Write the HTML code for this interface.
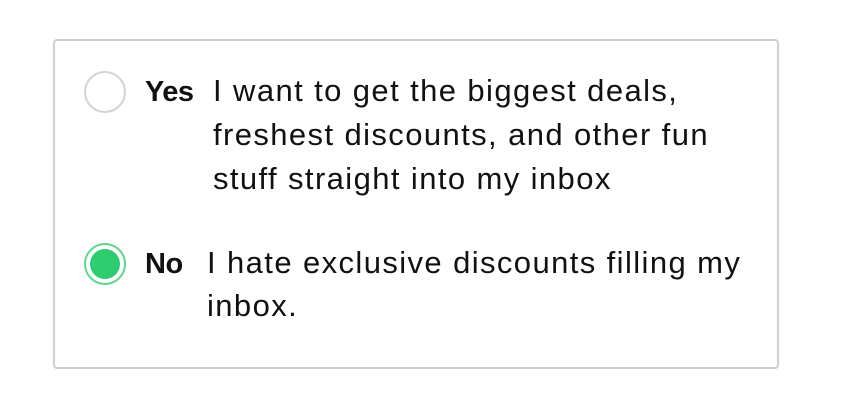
<!DOCTYPE html>
<html><head><style>
body{margin:0;width:862px;height:406px;background:#fff;position:relative;overflow:hidden;font-family:"Liberation Sans",sans-serif;color:#111;}
.box{position:absolute;left:53px;top:39px;width:722px;height:326px;border:2px solid #d0d0d0;border-radius:4px;}
.r{position:absolute;width:42px;height:42px;border-radius:50%;border:2px solid #d4d4d4;box-sizing:border-box;}
.r.on{border-color:#5fd68e;}
.r.on::after{content:"";position:absolute;left:4px;top:4px;width:30px;height:30px;border-radius:50%;background:#2dcc6f;}
.t{position:absolute;font-size:31px;line-height:44px;white-space:nowrap;letter-spacing:1.4px;}
b{font-weight:bold;font-size:29px;letter-spacing:-0.5px;}
</style></head><body>
<div class="box"></div>
<div class="r" style="left:84px;top:71px"></div>
<div class="t" style="left:145px;top:69px"><b>Yes</b></div>
<div class="t" style="left:213px;top:69px">I want to get the biggest deals,<br>freshest discounts, and other fun<br>stuff straight into my inbox</div>
<div class="r on" style="left:84px;top:243px"></div>
<div class="t" style="left:145px;top:241px"><b>No</b></div>
<div class="t" style="left:207px;top:241px;line-height:43px">I hate exclusive discounts filling my<br>inbox.</div>
</body></html>
